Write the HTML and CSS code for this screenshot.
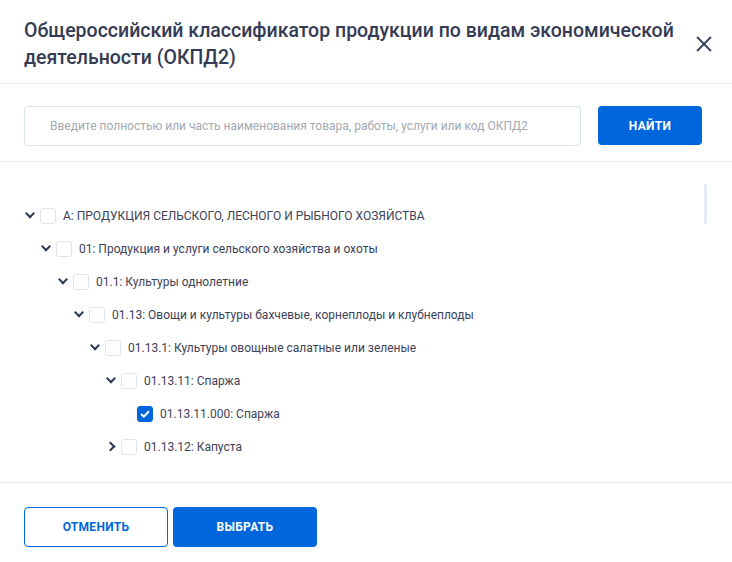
FILE: index.html
```html
<!DOCTYPE html>
<html lang="ru">
<head>
    <meta charset="UTF-8">
    <title>ОКПД2</title>
    <link rel="stylesheet" href="styles.css">
</head>
<body>
    <div class="modal">
        <div class="modal-header">
            <h1>Общероссийский классификатор продукции по видам экономической деятельности (ОКПД2)</h1>
            <button class="close-btn" aria-label="Закрыть">
                <svg width="16" height="16" viewBox="0 0 16 16"><path d="M1 1L15 15M15 1L1 15" stroke="#3b4660" stroke-width="2" fill="none"/></svg>
            </button>
        </div>

        <div class="search">
            <input type="text" class="search-input" placeholder="Введите полностью или часть наименования товара, работы, услуги или код ОКПД2">
            <button class="btn btn-primary search-btn">НАЙТИ</button>
        </div>

        <div class="tree">
            <div class="scrollbar"></div>
            <div class="tree-row level-0">
                <span class="toggle open"></span>
                <span class="check"></span>
                <span class="label">А: ПРОДУКЦИЯ СЕЛЬСКОГО, ЛЕСНОГО И РЫБНОГО ХОЗЯЙСТВА</span>
            </div>
            <div class="tree-row level-1">
                <span class="toggle open"></span>
                <span class="check"></span>
                <span class="label">01: Продукция и услуги сельского хозяйства и охоты</span>
            </div>
            <div class="tree-row level-2">
                <span class="toggle open"></span>
                <span class="check"></span>
                <span class="label">01.1: Культуры однолетние</span>
            </div>
            <div class="tree-row level-3">
                <span class="toggle open"></span>
                <span class="check"></span>
                <span class="label">01.13: Овощи и культуры бахчевые, корнеплоды и клубнеплоды</span>
            </div>
            <div class="tree-row level-4">
                <span class="toggle open"></span>
                <span class="check"></span>
                <span class="label">01.13.1: Культуры овощные салатные или зеленые</span>
            </div>
            <div class="tree-row level-5">
                <span class="toggle open"></span>
                <span class="check"></span>
                <span class="label">01.13.11: Спаржа</span>
            </div>
            <div class="tree-row level-6">
                <span class="toggle empty"></span>
                <span class="check checked">
                    <svg width="10" height="8" viewBox="0 0 10 8"><path d="M1 4L3.8 6.6L9 1.2" stroke="#fff" stroke-width="2" fill="none"/></svg>
                </span>
                <span class="label">01.13.11.000: Спаржа</span>
            </div>
            <div class="tree-row level-5">
                <span class="toggle closed"></span>
                <span class="check"></span>
                <span class="label">01.13.12: Капуста</span>
            </div>
        </div>

        <div class="modal-footer">
            <button class="btn btn-outline">ОТМЕНИТЬ</button>
            <button class="btn btn-primary">ВЫБРАТЬ</button>
        </div>
    </div>
</body>
</html>
```

FILE: styles.css
```css
body {
    margin: 0;
    background: #fff;
    color: #3a4057;
    font-family: Roboto, "Noto Sans", sans-serif;
}

.modal {
    width: 732px;
    height: 562px;
    display: flex;
    flex-direction: column;
}

.modal-header {
    display: flex;
    align-items: center;
    justify-content: space-between;
    padding: 17px 20px 12px 24px;
    border-bottom: 1px solid #e8ebef;
}

.modal-header h1 {
    margin: 0;
    font-size: 19.5px;
    font-weight: 500;
    line-height: 27px;
    color: #353b53;
    max-width: 660px;
}

.close-btn {
    border: none;
    background: none;
    padding: 0;
    width: 16px;
    height: 16px;
    cursor: pointer;
}

.search {
    display: flex;
    gap: 17px;
    padding: 22px 30px 15px 24px;
    border-bottom: 1px solid #e8ebef;
}

.search-input {
    flex: 1;
    height: 40px;
    box-sizing: border-box;
    border: 1px solid #dbe3ec;
    border-radius: 3px;
    padding: 0 25px;
    font-family: inherit;
    font-size: 12px;
    color: #3a4057;
}

.search-input::placeholder {
    color: #a3a8b1;
}

.btn {
    height: 40px;
    width: 144px;
    box-sizing: border-box;
    border-radius: 4px;
    font-family: inherit;
    font-size: 12px;
    font-weight: 700;
    letter-spacing: 0.3px;
    cursor: pointer;
}

.btn-primary {
    background: #0066dc;
    border: none;
    color: #fff;
}

.btn-outline {
    background: #fff;
    border: 1px solid #0066dc;
    color: #0066dc;
}

.search-btn {
    width: 104px;
    height: 39px;
}

.tree {
    flex: 1;
    position: relative;
    padding: 37px 24px 0 24px;
    border-bottom: 1px solid #e8ebef;
}

.scrollbar {
    position: absolute;
    top: 22px;
    right: 25px;
    width: 3px;
    height: 40px;
    border-radius: 2px;
    background: #e3edf8;
}

.tree-row {
    display: flex;
    align-items: center;
    height: 33px;
    font-size: 12px;
    color: #3c4258;
}

.level-1 { padding-left: 16px; }
.level-2 { padding-left: 33px; }
.level-3 { padding-left: 49px; }
.level-4 { padding-left: 65px; }
.level-5 { padding-left: 81px; }
.level-6 { padding-left: 97px; }

.toggle {
    width: 16px;
    height: 16px;
    display: flex;
    align-items: center;
    justify-content: center;
}

.toggle.open::before {
    content: '';
    width: 5px;
    height: 5px;
    border-right: 2px solid #2f3850;
    border-bottom: 2px solid #2f3850;
    transform: translate(-2.5px, -2px) rotate(45deg);
}

.toggle.closed::before {
    content: '';
    width: 5px;
    height: 5px;
    border-right: 2px solid #2f3850;
    border-bottom: 2px solid #2f3850;
    transform: translateX(-3px) rotate(-45deg);
}

.check {
    width: 16px;
    height: 16px;
    box-sizing: border-box;
    border: 1px solid #dde4ec;
    border-radius: 3px;
    margin-right: 7px;
    display: flex;
    align-items: center;
    justify-content: center;
}

.check.checked {
    background: #0066dc;
    border-color: #0066dc;
}

.modal-footer {
    display: flex;
    gap: 5px;
    padding: 24px 24px 15px 24px;
}
```
